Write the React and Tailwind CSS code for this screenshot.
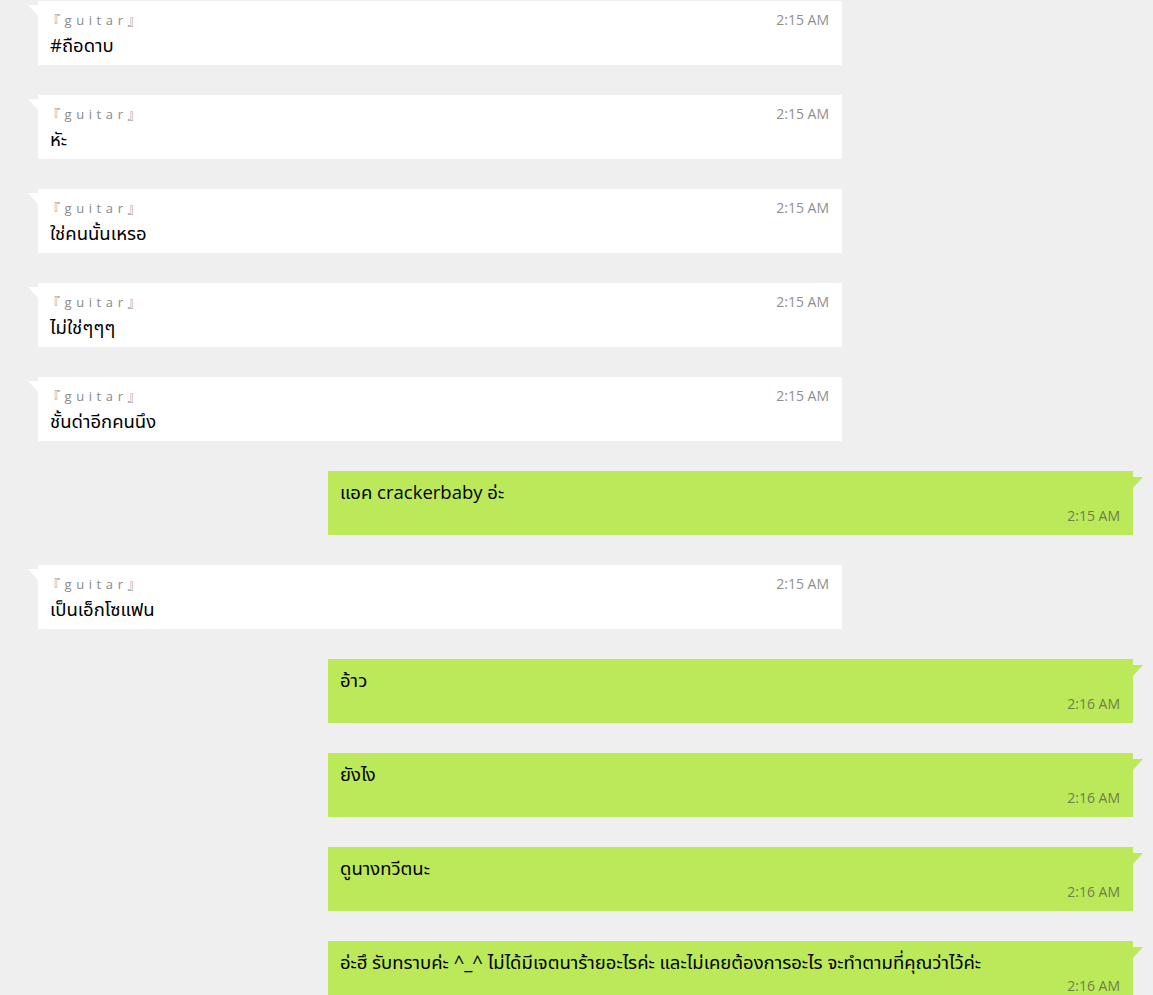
import React from 'react';

const messages = [
  { from: 'them', text: '#ถือดาบ', time: '2:15 AM' },
  { from: 'them', text: 'หัะ', time: '2:15 AM' },
  { from: 'them', text: 'ใช่คนนั้นเหรอ', time: '2:15 AM' },
  { from: 'them', text: 'ไม่ใช่ๆๆๆ', time: '2:15 AM' },
  { from: 'them', text: 'ชั้นด่าอีกคนนึง', time: '2:15 AM' },
  { from: 'me', text: 'แอค crackerbaby อ่ะ', time: '2:15 AM' },
  { from: 'them', text: 'เป็นเอ็กโซแฟน', time: '2:15 AM' },
  { from: 'me', text: 'อ้าว', time: '2:16 AM' },
  { from: 'me', text: 'ยังไง', time: '2:16 AM' },
  { from: 'me', text: 'ดูนางทวีตนะ', time: '2:16 AM' },
  { from: 'me', text: 'อ่ะฮึ รับทราบค่ะ ^_^ ไม่ได้มีเจตนาร้ายอะไรค่ะ และไม่เคยต้องการอะไร จะทำตามที่คุณว่าไว้ค่ะ', time: '2:16 AM' },
];

const Incoming = ({ text, time }) => (
  <div className="relative ml-[38px] w-[804px] h-[64px] bg-white shrink-0">
    {/* tail */}
    <svg className="absolute left-[-10px] top-[4px]" width="10" height="11" viewBox="0 0 10 11">
      <polygon points="0,0 10,0 10,11" fill="#ffffff" />
    </svg>
    <div className="flex justify-between pl-[12px] pr-[13px] pt-[9px]">
      <span
        className="text-[13px] leading-[20px] text-[#8a8a8a] tracking-[0.6px] -ml-[3px]"
        style={{ fontFamily: '"Open Sans", "Noto Sans CJK JP", sans-serif' }}
      >
        『 g u i t a r 』
      </span>
      <span className="text-[14px] leading-[20px] text-[#8f8f8f]">{time}</span>
    </div>
    <div className="pl-[12px] mt-[3px] text-[18.5px] leading-[24px] text-black">{text}</div>
  </div>
);

const Outgoing = ({ text, time }) => (
  <div className="relative ml-[328px] w-[805px] h-[64px] bg-[#bbe95a] shrink-0">
    <svg className="absolute right-[-10px] top-[6px]" width="10" height="11" viewBox="0 0 10 11">
      <polygon points="0,0 10,0 0,11" fill="#bbe95a" />
    </svg>
    <div className="pl-[12px] pt-[9px] text-[18.5px] leading-[24px] text-black whitespace-nowrap">{text}</div>
    <div className="flex justify-end pr-[13px] pt-[2px]">
      <span className="text-[14px] leading-[20px] text-[#6f7f4a]">{time}</span>
    </div>
  </div>
);

export default function App() {
  return (
    <div
      className="w-[1153px] h-[995px] overflow-hidden bg-[#efefef] pt-[1px] flex flex-col gap-[30px]"
      style={{ fontFamily: '"Segoe UI", "Open Sans", "Noto Sans", "Noto Sans Thai", "DejaVu Sans", sans-serif' }}
    >
      {messages.map((m, i) =>
        m.from === 'them' ? (
          <Incoming key={i} text={m.text} time={m.time} />
        ) : (
          <Outgoing key={i} text={m.text} time={m.time} />
        )
      )}
    </div>
  );
}
